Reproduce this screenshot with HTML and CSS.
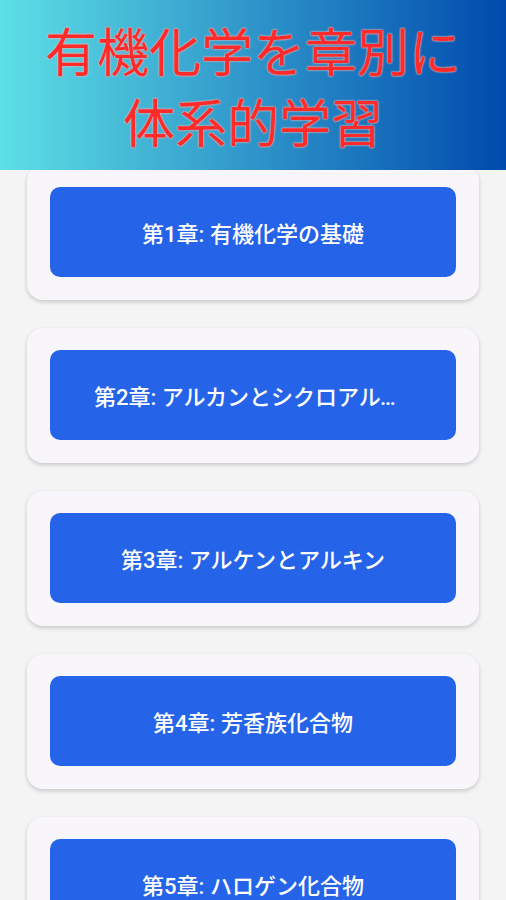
FILE: index.html
```html
<!DOCTYPE html>
<html lang="ja">
<head>
    <meta charset="UTF-8">
    <meta name="viewport" content="width=device-width, initial-scale=1.0">
    <title>有機化学を章別に体系的学習</title>
    <link rel="stylesheet" href="styles.css">
</head>
<body>
    <header class="banner">
        <h1>有機化学を章別に<br>体系的学習</h1>
    </header>

    <main class="chapter-list">
        <div class="chapter-card">
            <button class="chapter-button">第1章: 有機化学の基礎</button>
        </div>
        <div class="chapter-card">
            <button class="chapter-button">第2章: アルカンとシクロアルカン</button>
        </div>
        <div class="chapter-card">
            <button class="chapter-button">第3章: アルケンとアルキン</button>
        </div>
        <div class="chapter-card">
            <button class="chapter-button">第4章: 芳香族化合物</button>
        </div>
        <div class="chapter-card">
            <button class="chapter-button">第5章: ハロゲン化合物</button>
        </div>
    </main>
</body>
</html>
```

FILE: styles.css
```css
body {
    font-family: Roboto, "Noto Sans CJK JP", sans-serif;
    background: #f4f4f4;
    margin: 0;
    padding: 0;
    overflow: hidden;
}

.banner {
    position: relative;
    z-index: 1;
    height: 170px;
    display: flex;
    align-items: center;
    justify-content: center;
    background: linear-gradient(to right, #5de0e6, #004aad);
}

.banner h1 {
    margin: 0;
    font-family: "Noto Sans CJK JP", sans-serif;
    font-size: 52px;
    font-weight: 400;
    line-height: 71px;
    text-align: center;
    color: #ff2a2a;
    text-shadow: 0 0 2px #f3b4b4, 0 0 2px #f3b4b4;
}

.chapter-list {
    display: flex;
    flex-direction: column;
    gap: 28px;
    margin-top: -5px;
    padding: 0 27px;
}

.chapter-card {
    background: #f8f6fa;
    border-radius: 16px;
    padding: 22px 23px 23px;
    box-shadow: 0 2px 4px rgba(0, 0, 0, 0.18);
}

.chapter-button {
    display: block;
    width: 100%;
    height: 90px;
    padding: 0 44px;
    background: #2563e8;
    color: white;
    border: none;
    border-radius: 10px;
    font-family: Roboto, "Noto Sans CJK JP", sans-serif;
    font-size: 22px;
    font-weight: 500;
    white-space: nowrap;
    overflow: hidden;
    text-overflow: ellipsis;
    cursor: pointer;
}
```
